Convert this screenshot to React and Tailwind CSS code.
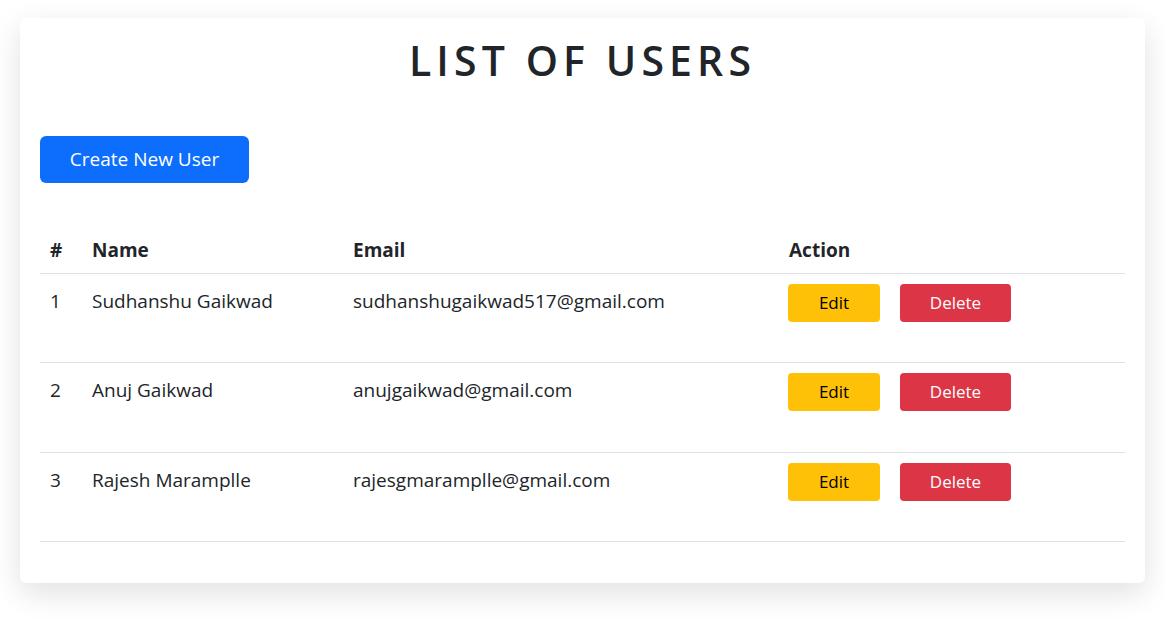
import React from "react";

const users = [
  { id: 1, name: "Sudhanshu Gaikwad", email: "sudhanshugaikwad517@gmail.com" },
  { id: 2, name: "Anuj Gaikwad", email: "anujgaikwad@gmail.com" },
  { id: 3, name: "Rajesh Maramplle", email: "rajesgmaramplle@gmail.com" },
];

export default function App() {
  return (
    <div className="min-h-[620px] bg-white pt-[18px] px-[20px] text-[#212529]" style={{ fontFamily: '"Open Sans", "Noto Sans", sans-serif' }}>
      <div className="bg-white rounded-[6px] shadow-[0_10px_30px_rgba(0,0,0,0.12)] px-[20px] pt-[18px] pb-[41px]">
        <h1 className="text-center text-[41px] font-semibold tracking-[0.125em] leading-[1.2] text-[#212529]">LIST OF USERS</h1>
        <div className="mt-[51px]">
          <button className="bg-[#0d6efd] text-white text-[19px] rounded-[6px] w-[209px] h-[47px]">Create New User</button>
        </div>
        <table className="w-full mt-[44px] text-[19px] border-collapse">
          <thead>
            <tr className="border-b border-[#dee2e6] h-[46px] text-left">
              <th className="pl-[10px] w-[52px] font-bold">#</th>
              <th className="pl-[0px] w-[261px] font-bold">Name</th>
              <th className="font-bold w-[436px]">Email</th>
              <th className="font-bold">Action</th>
            </tr>
          </thead>
          <tbody>
            {users.map((u) => (
              <tr key={u.id} className={`border-b border-[#dee2e6] align-top ${u.id === 2 ? "h-[90px]" : "h-[89px]"}`}>
                <td className="pl-[10px] pt-[13px]">{u.id}</td>
                <td className="pt-[13px]">{u.name}</td>
                <td className="pt-[13px]">{u.email}</td>
                <td className="pt-[10px]">
                  <div className="flex gap-[20px] -ml-[1px]">
                    <button className="bg-[#ffc107] text-[#000] w-[92px] h-[38px] rounded-[4px] text-[17px]">Edit</button>
                    <button className="bg-[#dc3545] text-white w-[111px] h-[38px] rounded-[4px] text-[17px]">Delete</button>
                  </div>
                </td>
              </tr>
            ))}
          </tbody>
        </table>
      </div>
    </div>
  );
}
